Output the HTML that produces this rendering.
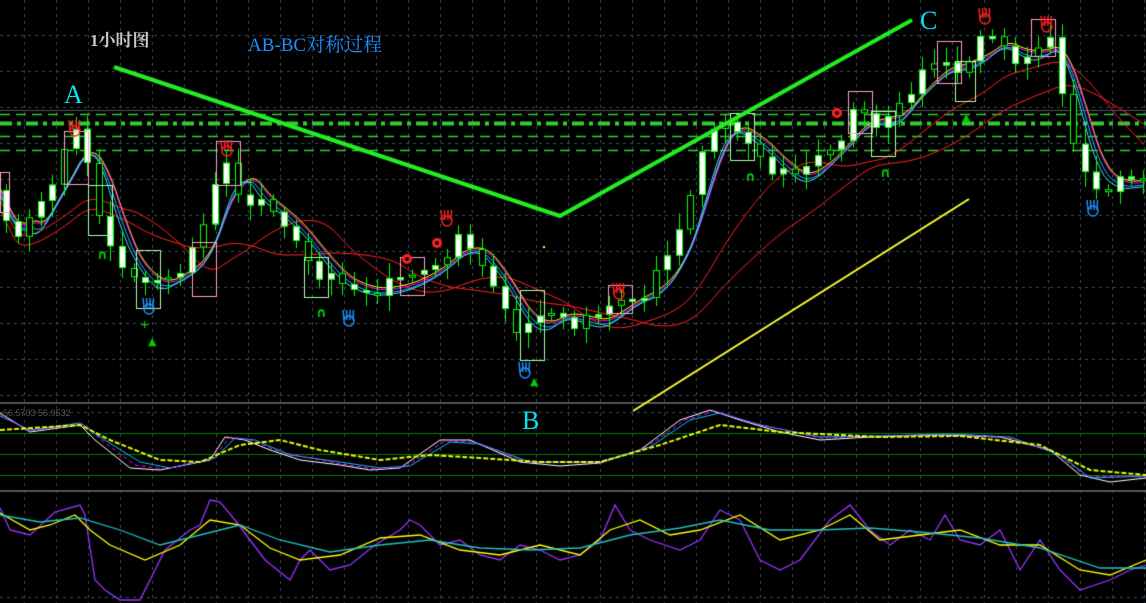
<!DOCTYPE html>
<html><head><meta charset="utf-8"><style>
html,body{margin:0;padding:0;background:#000;overflow:hidden}
#w{position:relative;width:1146px;height:603px}
canvas{position:absolute;left:0;top:0}
.t{position:absolute;font-family:"Liberation Serif","Noto Serif CJK SC",serif;white-space:nowrap}
</style></head><body><div id="w">
<canvas id="c" width="1146" height="603"></canvas>
<div class="t" style="left:90px;top:26px;font-size:17px;color:#c8c8c8;font-weight:bold">1小时图</div>
<div class="t" style="left:248px;top:30px;font-size:19px;color:#1e90ff">AB-BC对称过程</div>
<div class="t" style="left:64px;top:80px;font-size:26px;color:#00e5ee">A</div>
<div class="t" style="left:522px;top:406px;font-size:26px;color:#00e5ee">B</div>
<div class="t" style="left:920px;top:6px;font-size:26px;color:#00e5ee">C</div>
<div class="t" style="left:3px;top:408px;font-size:9px;color:#555;font-family:'Liberation Sans',sans-serif">56.5703 56.9532</div>
</div>
<script>
const c=document.getElementById('c').getContext('2d');
function interp(pts,x){for(let i=0;i<pts.length-1;i++){if(x>=pts[i][0]&&x<=pts[i+1][0]){const t=(x-pts[i][0])/(pts[i+1][0]-pts[i][0]);return pts[i][1]+t*(pts[i+1][1]-pts[i][1]);}}return pts[pts.length-1][1];}
function line(pts,col,w,dash){c.beginPath();c.strokeStyle=col;c.lineWidth=w||1;c.setLineDash(dash||[]);pts.forEach((p,i)=>i?c.lineTo(p[0],p[1]):c.moveTo(p[0],p[1]));c.stroke();c.setLineDash([]);}
c.strokeStyle='#3a4a5a';c.lineWidth=1;c.setLineDash([3,4]);
for(let x=24.5;x<1146;x+=32){c.beginPath();c.moveTo(x,0);c.lineTo(x,603);c.stroke();}
for(let y=35.5;y<400;y+=36){c.beginPath();c.moveTo(0,y);c.lineTo(1146,y);c.stroke();}
for(let y of [412.5,597.5]){c.beginPath();c.moveTo(0,y);c.lineTo(1146,y);c.stroke();}
c.setLineDash([]);
c.fillStyle='#555';c.fillRect(0,402,1146,2);c.fillRect(0,490,1146,2);
c.fillRect(0,110,1146,1);
c.fillStyle='#0a7a0a';[433,454,475].forEach(y=>c.fillRect(0,y,1146,1));
line([[0,114.5],[1146,114.5]],'#33cc33',1.5,[10,6]);
line([[0,123.5],[1146,123.5]],'#33cc33',4,[12,5,4,5]);
line([[0,136.5],[1146,136.5]],'#33cc33',1.5,[10,6]);
line([[0,150.5],[1146,150.5]],'#33cc33',1.5,[10,6]);
const P=[[0,190],[15,250],[30,220],[60,170],[80,130],[95,180],[105,230],[120,250],[140,290],[160,280],[180,270],[200,250],[215,200],[225,150],[240,190],[270,210],[300,240],[320,270],[350,290],[380,290],[410,280],[440,260],[460,240],[480,260],[500,290],[525,335],[540,320],[560,310],[580,325],[600,320],[620,300],[650,290],[670,260],[690,210],[700,160],[715,120],[740,135],[760,150],[780,175],[800,180],[820,155],[840,140],[860,110],[880,130],[900,100],[920,80],[945,60],[960,70],[980,45],[1000,40],[1020,65],[1040,40],[1055,45],[1065,100],[1080,160],[1100,185],[1146,180]];
function ma(n,off,lag){const r=[];const xs=[];for(let x=0;x<=1146;x+=4)xs.push(interp(P,x));for(let i=0;i<xs.length;i++){let s=0,k=0;for(let j=Math.max(0,i-n);j<=i;j++){s+=xs[j];k++;}r.push([i*4,s/k+(off||0)]);}return r;}
line(ma(45,20),'#ff2020',1);line(ma(28,10),'#ff2020',1);
line(ma(9,-2),'#ffff00',1);line(ma(9,0),'#ff00ff',1);line(ma(8,3),'#00bfff',1);line(ma(7,5),'#4fd0ff',1);
let prev=interp(P,0);let i=0;
for(let x=3;x<1146;x+=11.6){i++;const cl=interp(P,x+6)+(((i*37)%17)-8);const op=prev;const hi=Math.min(op,cl)-5-((i*13)%12);const lo=Math.max(op,cl)+5+((i*7)%12);
const X=Math.round(x);
c.fillStyle='#00ff00';c.fillRect(X+3,hi,1,lo-hi);
const t=Math.min(op,cl),h=Math.max(3,Math.abs(op-cl));
c.fillStyle=cl<op?'#000':'#fff';
if((i%3)==0)c.fillStyle='#000';else c.fillStyle='#fff';
c.fillRect(X,t,7,h);c.strokeStyle='#00ff00';c.lineWidth=1;c.strokeRect(X+.5,t+.5,6,h-1);
prev=cl;}
c.strokeStyle='#ff9ec8';c.lineWidth=1;
[[64,131,24,53],[216,141,24,44],[192,242,24,54],[400,257,24,38],[608,285,24,28],[848,91,24,42],[937,41,24,42],[1031,19,24,37],[0,172,9,40]].forEach(b=>c.strokeRect(b[0]+.5,b[1]+.5,b[2],b[3]));
c.strokeStyle='#aaffaa';
[[88,185,24,50],[136,250,24,58],[304,257,24,40],[520,290,24,70],[730,113,24,47],[871,111,24,45],[955,61,20,40]].forEach(b=>c.strokeRect(b[0]+.5,b[1]+.5,b[2],b[3]));
function hand(x,y,col){c.strokeStyle=col;c.lineWidth=1.5;for(let k=0;k<4;k++){c.beginPath();c.moveTo(x+2+k*3,y+10);c.lineTo(x+1+k*3.5,y);c.stroke();}c.beginPath();c.arc(x+7,y+11,5,0,Math.PI*2);c.stroke();}
[[68,120],[220,140],[440,210],[978,8],[1040,16],[612,283]].forEach(m=>hand(m[0],m[1],'#ff2020'));
[[402,254],[432,238],[832,108]].forEach(m=>{c.fillStyle='#ff2020';c.beginPath();c.arc(m[0]+5,m[1]+5,5,0,7);c.fill();c.fillStyle='#000';c.beginPath();c.arc(m[0]+5,m[1]+5,2,0,7);c.fill();});
[[142,298],[342,310],[518,362],[1086,200]].forEach(m=>hand(m[0],m[1],'#1e90ff'));
c.fillStyle='#00cc00';c.font='bold 13px "DejaVu Sans",sans-serif';
[[97,259],[316,317],[745,181],[880,177]].forEach(m=>c.fillText('∩',m[0],m[1]));
c.font='bold 11px "DejaVu Sans",sans-serif';
[[148,345],[530,385],[962,121]].forEach(m=>c.fillText('▲',m[0],m[1]));
c.fillText('+',140,328);
line([[114,67],[560,216],[912,20]],'#22ee22',4);
line([[633,411],[969,199]],'#ffff33',2);
c.fillStyle='#ff0';c.fillRect(543,246,2,2);
line([[0,413],[30,432],[80,425],[95,440],[130,468],[160,470],[210,460],[225,437],[245,440],[270,450],[300,460],[340,465],[370,470],[400,468],[440,440],[470,440],[520,462],[560,466],[600,463],[640,450],[680,420],[710,410],[740,420],[780,432],[820,440],[870,437],[940,435],[1000,437],[1050,450],[1080,475],[1110,482],[1146,478]],'#ffffff',1);
line([[0,416],[30,430],[80,423],[100,437],[140,462],[170,468],[215,458],[235,438],[255,440],[290,455],[340,462],[380,468],[410,466],[450,442],[480,444],[530,462],[600,462],[650,447],[690,420],[720,413],[760,425],[820,437],[880,436],[950,434],[1010,437],[1060,455],[1090,478],[1146,476]],'#00bfff',1);
line([[0,415],[30,431],[85,424],[100,439],[135,465],[165,469],[212,459],[230,437],[250,440],[280,452],[340,464],[375,469],[405,467],[445,441],[475,442],[525,462],[600,463],[645,448],[685,420],[715,411],[750,422],[820,438],[875,436],[945,435],[1005,437],[1055,452],[1085,476],[1146,477]],'#ff00ff',1,[4,3]);
line([[0,430],[80,425],[110,440],[160,460],[200,462],[240,445],[280,440],[320,450],[380,460],[430,455],[480,458],[540,462],[600,462],[660,445],[720,425],[780,432],[880,437],[960,436],[1040,445],[1090,470],[1146,475]],'#ddff00',2,[5,2]);
line([[0,508],[10,530],[30,535],[55,512],[80,505],[85,515],[95,580],[105,590],[120,600],[140,600],[165,550],[190,530],[200,525],[210,500],[220,502],[235,520],[250,540],[265,560],[290,580],[300,560],[310,550],[330,570],[350,565],[375,545],[400,530],[410,520],[420,525],[440,545],[460,540],[480,555],[500,560],[520,545],[540,550],[560,560],[580,555],[600,540],[615,505],[630,530],[650,540],[680,550],[700,540],[720,510],[740,520],[760,560],[780,570],[800,560],[830,520],[850,505],[870,530],[890,545],[910,530],[930,540],[945,515],[960,540],[980,545],[1000,530],[1020,570],[1040,540],[1060,570],[1080,590],[1110,580],[1130,570],[1146,565]],'#9933ff',1.3);
line([[0,513],[30,530],[50,525],[75,515],[90,530],[110,545],[145,560],[180,545],[210,520],[240,525],[270,548],[300,560],[340,555],[380,538],[420,535],[460,550],[500,555],[540,545],[580,555],[610,530],[640,520],[670,535],[700,530],[740,515],[780,540],[820,530],[850,515],[880,540],[920,535],[960,530],[1000,545],[1040,545],[1080,570],[1110,575],[1146,560]],'#ffff00',1.3);
line([[0,515],[40,522],[80,518],[120,530],[160,545],[200,535],[240,525],[280,540],[330,552],[380,545],[430,540],[480,548],[530,550],[580,548],[630,535],[680,528],[720,520],[770,530],[820,530],[870,528],[920,532],[980,538],[1040,548],[1100,568],[1146,568]],'#20c0c0',1.3);
</script></body></html>
